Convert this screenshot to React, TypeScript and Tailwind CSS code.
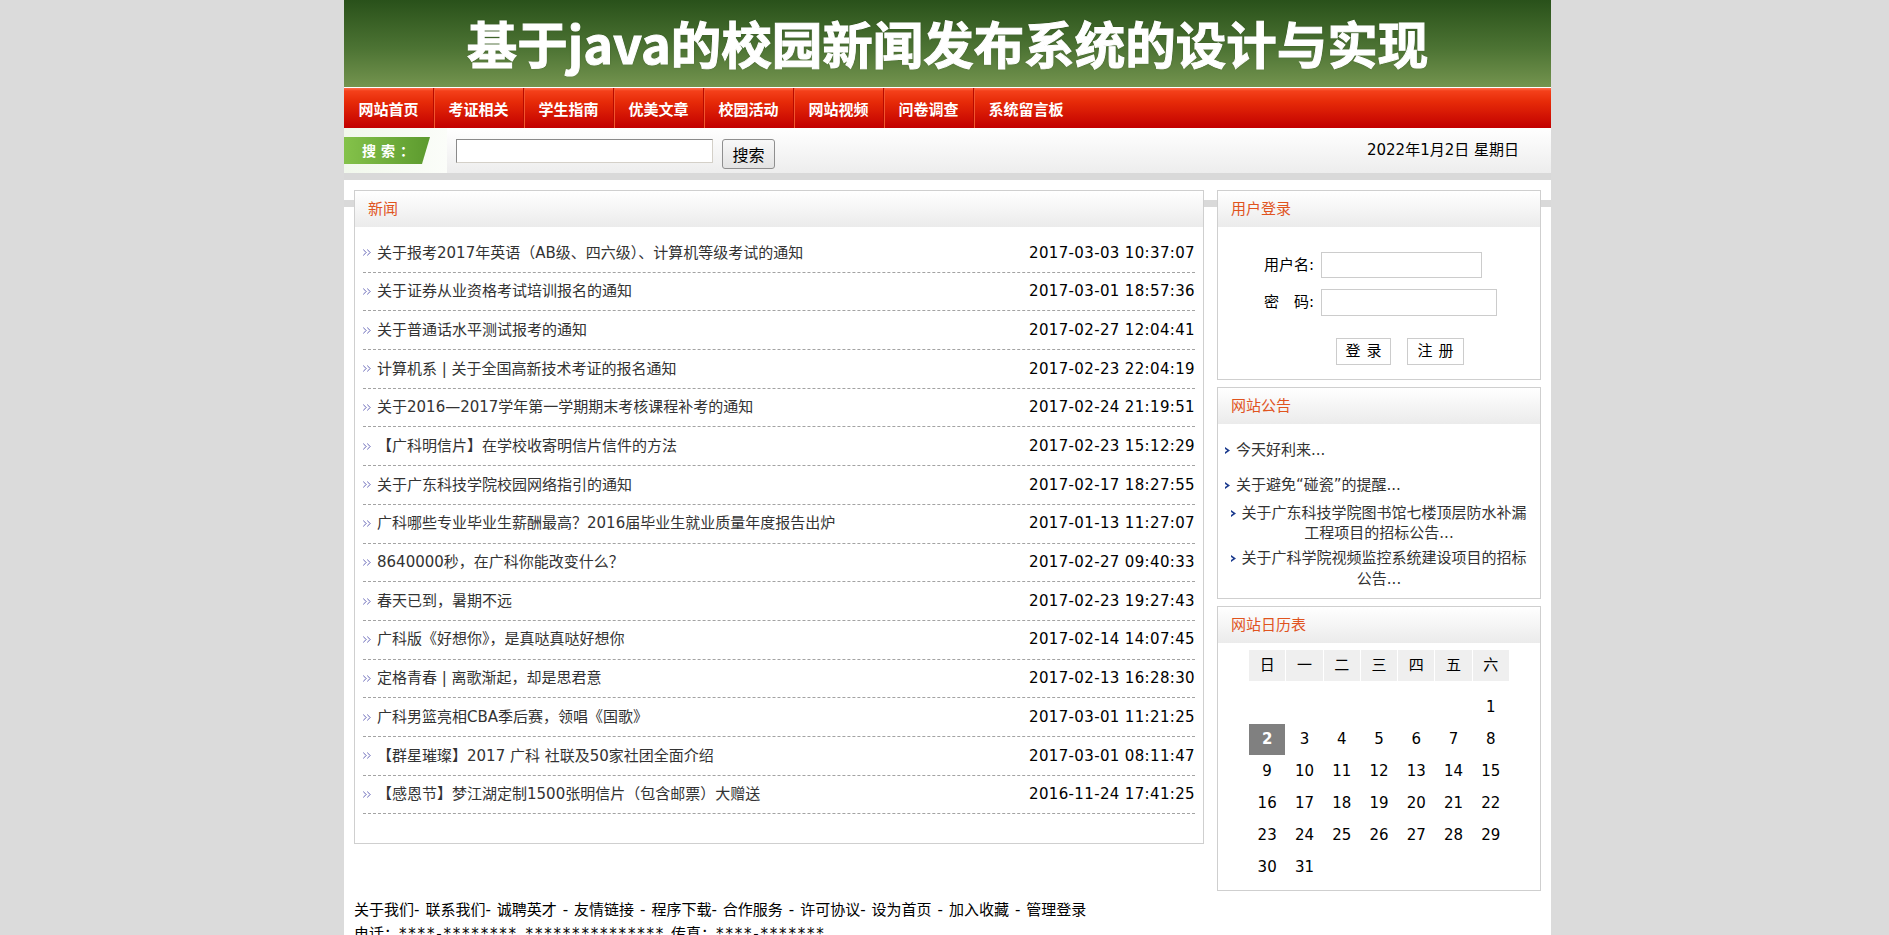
import React from "react";

const navItems = ["网站首页", "考证相关", "学生指南", "优美文章", "校园活动", "网站视频", "问卷调查", "系统留言板"];

const news: [string, string][] = [
  ["关于报考2017年英语（AB级、四六级）、计算机等级考试的通知", "2017-03-03 10:37:07"],
  ["关于证券从业资格考试培训报名的通知", "2017-03-01 18:57:36"],
  ["关于普通话水平测试报考的通知", "2017-02-27 12:04:41"],
  ["计算机系 | 关于全国高新技术考证的报名通知", "2017-02-23 22:04:19"],
  ["关于2016—2017学年第一学期期末考核课程补考的通知", "2017-02-24 21:19:51"],
  ["【广科明信片】在学校收寄明信片信件的方法", "2017-02-23 15:12:29"],
  ["关于广东科技学院校园网络指引的通知", "2017-02-17 18:27:55"],
  ["广科哪些专业毕业生薪酬最高？2016届毕业生就业质量年度报告出炉", "2017-01-13 11:27:07"],
  ["8640000秒，在广科你能改变什么？", "2017-02-27 09:40:33"],
  ["春天已到，暑期不远", "2017-02-23 19:27:43"],
  ["广科版《好想你》，是真哒真哒好想你", "2017-02-14 14:07:45"],
  ["定格青春 | 离歌渐起，却是思君意", "2017-02-13 16:28:30"],
  ["广科男篮亮相CBA季后赛，领唱《国歌》", "2017-03-01 11:21:25"],
  ["【群星璀璨】2017 广科 社联及50家社团全面介绍", "2017-03-01 08:11:47"],
  ["【感恩节】梦江湖定制1500张明信片（包含邮票）大赠送", "2016-11-24 17:41:25"],
];

const weekDays = ["日", "一", "二", "三", "四", "五", "六"];

// January 2022 starts on a Saturday
const calendarCells: (number | null)[] = [...Array(6).fill(null), ...Array.from({ length: 31 }, (_, i) => i + 1)];

function NewsBullet() {
  // small pixel "»" in lavender
  const px: [number, number, string][] = [
    [0, 0, "#b5b5dd"], [4, 0, "#b5b5dd"],
    [1, 1, "#9e9ed0"], [5, 1, "#9e9ed0"], [0, 1, "#d4d4ec"], [4, 1, "#d4d4ec"],
    [2, 2, "#9e9ed0"], [6, 2, "#9e9ed0"], [1, 2, "#c4c4e4"], [5, 2, "#c4c4e4"],
    [3, 3, "#a8a8d6"], [7, 3, "#a8a8d6"], [2, 3, "#c4c4e4"], [6, 3, "#c4c4e4"],
    [2, 4, "#9e9ed0"], [6, 4, "#9e9ed0"], [1, 4, "#c4c4e4"], [5, 4, "#c4c4e4"],
    [1, 5, "#9e9ed0"], [5, 5, "#9e9ed0"], [0, 5, "#d4d4ec"], [4, 5, "#d4d4ec"],
    [0, 6, "#b5b5dd"], [4, 6, "#b5b5dd"],
  ];
  return (
    <svg width="8" height="7" viewBox="0 0 8 7" className="shrink-0" shapeRendering="crispEdges">
      {px.map(([x, y, c], i) => (
        <rect key={i} x={x} y={y} width="1" height="1" fill={c} />
      ))}
    </svg>
  );
}

function NoticeBullet() {
  return (
    <svg width="5" height="7" viewBox="0 0 5 7" className="inline-block shrink-0 align-middle">
      <path d="M0 0 L5 3.5 L0 7 L0 5 L2.2 3.5 L0 2 Z" fill="#1d3c8f" />
    </svg>
  );
}

function Box({ title, className, children }: { title: string; className?: string; children: React.ReactNode }) {
  return (
    <div className={`border border-[#cfcfcf] bg-white ${className ?? ""}`}>
      <div className="h-[36px] flex items-center pl-[13px] bg-[linear-gradient(to_bottom,#ffffff,#ebebeb)] text-[15px] text-[#e0541e]">
        {title}
      </div>
      {children}
    </div>
  );
}

export default function App() {
  return (
    <div className="min-h-screen bg-[#dbdbdb] font-['DejaVu_Sans','Noto_Sans_CJK_SC',sans-serif] text-[#222]">
      <div className="ml-[344px] w-[1207px] min-h-[935px] bg-white">
        {/* Banner */}
        <div className="h-[88px] border-b border-white bg-[linear-gradient(to_bottom,#29511a,#4c7333_55%,#74944f)] flex items-center justify-center">
          <h1 className="font-['Noto_Sans_CJK_SC',sans-serif] text-[50.5px] font-bold leading-none text-white mt-[-2px] [-webkit-text-stroke:1px_white] [text-shadow:0_0_2px_rgba(0,0,0,0.35)]">
            基于java的校园新闻发布系统的设计与实现
          </h1>
        </div>

        {/* Nav */}
        <div className="h-[40px] flex bg-[linear-gradient(to_bottom,#ff6a4a_0px,#f4401a_3px,#e62a08_35%,#c20000)]">
          {navItems.map((item, i) => (
            <a
              key={item}
              href="#"
              className={`flex items-center px-[14.5px] pt-[2px] font-['Noto_Sans_CJK_SC',sans-serif] text-[15px] font-bold text-white ${i < navItems.length - 1 ? "border-r border-[#b80a00] shadow-[1px_0_0_#f2562e]" : ""}`}
            >
              {item}
            </a>
          ))}
        </div>

        {/* Search bar */}
        <div className="h-[45px] flex items-center bg-[linear-gradient(to_bottom,#ffffff,#ededed)]">
          <div className="h-full w-[103px] flex items-center bg-[linear-gradient(to_right,#f1f8ec,#fbfdf9)]">
            <div className="h-[27px] w-[86px] flex items-center pl-[18px] bg-[linear-gradient(to_right,#84c24a,#5c9a2e)] [clip-path:polygon(0_0,100%_0,calc(100%-8px)_100%,0_100%)] font-['Noto_Sans_CJK_SC',sans-serif] text-[14px] font-bold text-white tracking-[5px]">
              搜索：
            </div>
          </div>
          <input
            type="text"
            className="ml-[9px] h-[24px] w-[257px] bg-white border border-t-[#8a8a8a] border-l-[#8a8a8a] border-b-[#d4d0c8] border-r-[#d4d0c8] outline-none"
          />
          <button className="ml-[9px] h-[30px] w-[53px] mt-[6px] rounded-[3px] border border-[#8f8f8f] bg-[linear-gradient(to_bottom,#f8f8f8,#e3e3e3)] font-['Noto_Sans_CJK_SC',sans-serif] text-[16px] leading-none text-black">
            搜索
          </button>
          <div className="ml-auto pr-[32px] text-[15px] text-black">2022年1月2日 星期日</div>
        </div>
        <div className="h-[7px] bg-[#d9d9d9]" />

        {/* Main */}
        <div className="px-[10px] pt-[10px] bg-[linear-gradient(to_bottom,#ffffff_20px,#d9d9d9_20px,#d9d9d9_27px,#ffffff_27px)]">
          <div className="flex gap-[13px] items-start">
            {/* News */}
            <Box title="新闻" className="w-[850px] h-[654px]">
              <ul className="px-[8px] pt-[7px]">
                {news.map(([title, time]) => (
                  <li
                    key={title}
                    className="h-[38.7px] flex items-center justify-between border-b border-dashed border-[#a3a3a3] text-[15px]"
                  >
                    <span className="flex items-center gap-[6px] text-[#333]">
                      <NewsBullet />
                      {title}
                    </span>
                    <span className="text-black tracking-[0.35px]">{time}</span>
                  </li>
                ))}
              </ul>
            </Box>

            {/* Right column */}
            <div className="w-[324px] flex flex-col gap-[7px]">
              <Box title="用户登录" className="h-[190px]">
                <div className="pt-[25px] text-[15px] text-black">
                  <div className="flex items-center">
                    <span className="w-[96px] text-right">用户名:</span>
                    <input className="ml-[7px] h-[26px] w-[161px] border border-[#cccccc] outline-none" />
                  </div>
                  <div className="flex items-center mt-[11px]">
                    <span className="w-[96px] text-right">
                      密<span className="inline-block w-[15px]" />码:
                    </span>
                    <input className="ml-[7px] h-[27px] w-[176px] border border-[#cccccc] outline-none" />
                  </div>
                  <div className="flex gap-[16px] pl-[118px] mt-[22px]">
                    <button className="h-[27px] w-[55px] border border-[#cccccc] bg-white text-[15px] tracking-[6px] pl-[6px]">
                      登录
                    </button>
                    <button className="h-[27px] w-[57px] border border-[#cccccc] bg-white text-[15px] tracking-[6px] pl-[6px]">
                      注册
                    </button>
                  </div>
                </div>
              </Box>

              <Box title="网站公告" className="h-[212px]">
                <ul className="pt-[8.5px] text-[15px] text-[#333]">
                  <li className="h-[35px] flex items-center gap-[6px] pl-[7px]">
                    <NoticeBullet />
                    今天好利来...
                  </li>
                  <li className="h-[35px] flex items-center gap-[6px] pl-[7px]">
                    <NoticeBullet />
                    关于避免“碰瓷”的提醒...
                  </li>
                  <li className="px-[10px] text-center leading-[20.5px]">
                    <NoticeBullet />
                    <span className="ml-[5px]">关于广东科技学院图书馆七楼顶层防水补漏工程项目的招标公告...</span>
                  </li>
                  <li className="mt-[4.5px] px-[10px] text-center leading-[20.5px]">
                    <NoticeBullet />
                    <span className="ml-[5px]">关于广科学院视频监控系统建设项目的招标公告...</span>
                  </li>
                </ul>
              </Box>

              <Box title="网站日历表" className="h-[285px]">
                <div className="pt-[7px] flex justify-center">
                  <div className="w-[260px]">
                    <div className="grid grid-cols-7 gap-x-px">
                      {weekDays.map((d) => (
                        <div key={d} className="h-[31px] flex items-center justify-center bg-[#efefef] text-[15px] text-black">
                          {d}
                        </div>
                      ))}
                    </div>
                    <div className="grid grid-cols-7 gap-x-px gap-y-px mt-[10.5px]">
                      {calendarCells.map((d, i) => (
                        <div
                          key={i}
                          className={`h-[31px] flex items-center justify-center text-[15px] ${d === 2 ? "bg-[#808080] text-white font-bold" : "text-black"}`}
                        >
                          {d ?? ""}
                        </div>
                      ))}
                    </div>
                  </div>
                </div>
              </Box>
            </div>
          </div>

          {/* Footer */}
          <div className="pt-[7px] pb-[10px] text-[15px] leading-[24px] text-black [word-spacing:1.2px]">
            <p>关于我们- 联系我们- 诚聘英才 - 友情链接 - 程序下载- 合作服务 - 许可协议- 设为首页 - 加入收藏 - 管理登录</p>
            <p>
              电话：<span className="tracking-[1.8px]">****-******** ***************</span> 传真：
              <span className="tracking-[1.8px]">****-*******</span>
            </p>
          </div>
        </div>
      </div>
    </div>
  );
}
